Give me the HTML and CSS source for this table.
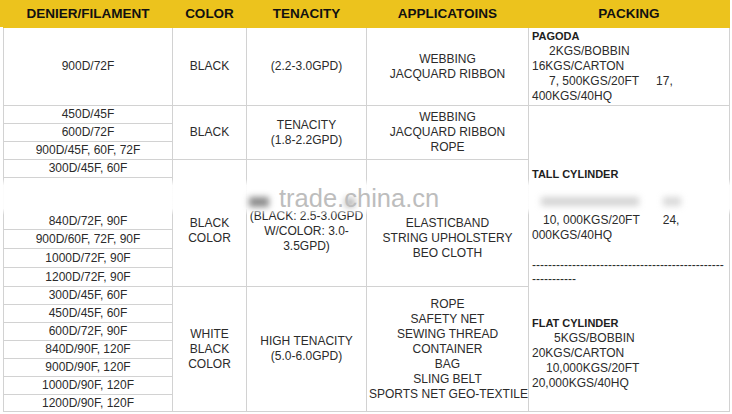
FILE: index.html
```html
<!DOCTYPE html>
<html lang="en">
<head>
<meta charset="utf-8">
<title>Specification</title>
<link rel="stylesheet" href="styles.css">
</head>
<body>
<div class="page">
  <table class="spec">
    <colgroup>
      <col class="c1"><col class="c2"><col class="c3"><col class="c4"><col class="c5">
    </colgroup>
    <thead>
      <tr><th>DENIER/FILAMENT</th><th>COLOR</th><th>TENACITY</th><th>APPLICATOINS</th><th>PACKING</th></tr>
    </thead>
    <tbody>
      <tr class="t78">
        <td>900D/72F</td>
        <td>BLACK</td>
        <td>(2.2-3.0GPD)</td>
        <td>WEBBING<br>JACQUARD RIBBON</td>
        <td class="pack">
          <div class="lbl">PAGODA</div>
          <div class="ind">2KGS/BOBBIN</div>
          <div>16KGS/CARTON</div>
          <div class="ind">7, 500KGS/20FT<span class="gap">17,</span></div>
          <div>400KGS/40HQ</div>
        </td>
      </tr>
      <tr>
        <td>450D/45F</td>
        <td rowspan="3">BLACK</td>
        <td rowspan="3">TENACITY<br>(1.8-2.2GPD)</td>
        <td rowspan="3">WEBBING<br>JACQUARD RIBBON<br>ROPE</td>
        <td rowspan="15" class="pack pack2">
          <div class="lbl">TALL CYLINDER</div>
          <div class="ind2 sp31">10, 000KGS/20FT<span class="gap2">24,</span></div>
          <div>000KGS/40HQ</div>
          <div class="dash sp14">------------------------------------------------</div>
          <div class="dash">-----------</div>
          <div class="lbl sp30">FLAT CYLINDER</div>
          <div class="ind3">5KGS/BOBBIN</div>
          <div>20KGS/CARTON</div>
          <div class="ind4">10,000KGS/20FT</div>
          <div>20,000KGS/40HQ</div>
        </td>
      </tr>
      <tr><td>600D/72F</td></tr>
      <tr><td>900D/45F, 60F, 72F</td></tr>
      <tr>
        <td>300D/45F, 60F</td>
        <td rowspan="5" class="g3c">BLACK<br>COLOR</td>
        <td rowspan="5" class="g3t">(BLACK: 2.5-3.0GPD<br>W/COLOR: 3.0-<br>3.5GPD)</td>
        <td rowspan="5" class="g3a">ELASTICBAND<br>STRING UPHOLSTERY<br>BEO CLOTH</td>
      </tr>
      <tr class="t52"><td class="bottom">840D/72F, 90F</td></tr>
      <tr class="t19"><td>900D/60F, 72F, 90F</td></tr>
      <tr class="t19"><td>1000D/72F, 90F</td></tr>
      <tr class="t19"><td>1200D/72F, 90F</td></tr>
      <tr>
        <td>300D/45F, 60F</td>
        <td rowspan="7">WHITE<br>BLACK<br>COLOR</td>
        <td rowspan="7">HIGH TENACITY<br>(5.0-6.0GPD)</td>
        <td rowspan="7">ROPE<br>SAFETY NET<br>SEWING THREAD<br>CONTAINER<br>BAG<br>SLING BELT<br>SPORTS NET GEO-TEXTILE</td>
      </tr>
      <tr><td>450D/45F, 60F</td></tr>
      <tr><td>600D/72F, 90F</td></tr>
      <tr><td>840D/90F, 120F</td></tr>
      <tr><td>900D/90F, 120F</td></tr>
      <tr><td>1000D/90F, 120F</td></tr>
      <tr class="t17"><td>1200D/90F, 120F</td></tr>
    </tbody>
  </table>

  <div class="wm-band"></div>
  <div class="smudge s1"></div>
  <div class="smudge s2"></div>
  <div class="smudge s3"></div>
  <div class="smudge s4"></div>
  <div class="wm-text">trade.china.cn</div>
</div>
</body>
</html>
```

FILE: styles.css
```css
html, body {
  margin: 0;
  padding: 0;
  background: #ffffff;
}

body {
  font-family: "Liberation Sans", Arial, sans-serif;
}

.page {
  position: relative;
  width: 732px;
  height: 414px;
  overflow: hidden;
  background: linear-gradient(#ecc31d 0, #ecc31d 27px, #ffffff 27px) no-repeat;
  background-size: 730px 100%;
}

.spec {
  margin-left: 3px;
  width: 726px;
  border-collapse: collapse;
  table-layout: fixed;
  font-size: 12px;
  color: #2b2b2b;
}

.c1 { width: 169px; }
.c2 { width: 74px; }
.c3 { width: 120px; }
.c4 { width: 162px; }
.c5 { width: 201px; }

.spec th {
  height: 27px;
  padding: 0;
  background: #ecc31d;
  color: #111111;
  font-size: 13.5px;
  font-weight: bold;
  text-align: center;
  border: 1px solid #ecc31d;
  border-top: none;
}

.spec td {
  padding: 0 2px;
  border: 1px solid #d2d2d2;
  text-align: center;
  vertical-align: middle;
  line-height: 15px;
  white-space: nowrap;
}

.spec tbody tr { height: 18px; }
.spec tr.t78 { height: 78px; }
.spec tr.t52 { height: 52px; }
.spec tr.t19 { height: 19px; }
.spec tr.t17 { height: 17px; }

.spec td.bottom { vertical-align: bottom; }

.spec td.g3c { padding-top: 16px; }
.spec td.g3t { padding-top: 17px; }
.spec td.g3a { padding-top: 30px; }

.spec td.pack {
  text-align: left;
  padding: 0 3px;
}

.spec td.pack2 {
  vertical-align: top;
  padding-top: 61px;
}

.lbl {
  font-weight: bold;
  font-size: 11px;
  color: #1e1e1e;
}

.ind { padding-left: 17px; }
.ind2 { padding-left: 11px; }
.ind3 { padding-left: 22px; }
.ind4 { padding-left: 14px; }

.gap { margin-left: 17px; }
.gap2 { margin-left: 23px; }

.sp31 { margin-top: 31px; }
.sp14 { margin-top: 15px; }
.sp30 { margin-top: 30px; }

.dash {
  line-height: 14px;
}

/* watermark overlay */
.wm-band {
  position: absolute;
  left: 0;
  top: 179px;
  width: 732px;
  height: 36px;
  background: linear-gradient(rgba(255,255,255,0), rgba(255,255,255,0.93) 18%, rgba(255,255,255,0.93) 82%, rgba(255,255,255,0));
}

.smudge {
  position: absolute;
  filter: blur(3px);
}

.s1 { left: 249px; top: 197px; width: 20px; height: 10px; background: rgba(90,90,90,0.7); }
.s2 { left: 345px; top: 198px; width: 10px; height: 9px; background: rgba(110,110,110,0.5); }
.s3 { left: 541px; top: 197px; width: 98px; height: 9px; background: rgba(160,160,160,0.45); }
.s4 { left: 663px; top: 197px; width: 18px; height: 9px; background: rgba(160,160,160,0.4); }

.wm-text {
  position: absolute;
  left: 279px;
  top: 186px;
  font-family: "Liberation Sans", Arial, sans-serif;
  font-size: 25.5px;
  line-height: 1;
  color: #bdbdbd;
  white-space: nowrap;
}
```
